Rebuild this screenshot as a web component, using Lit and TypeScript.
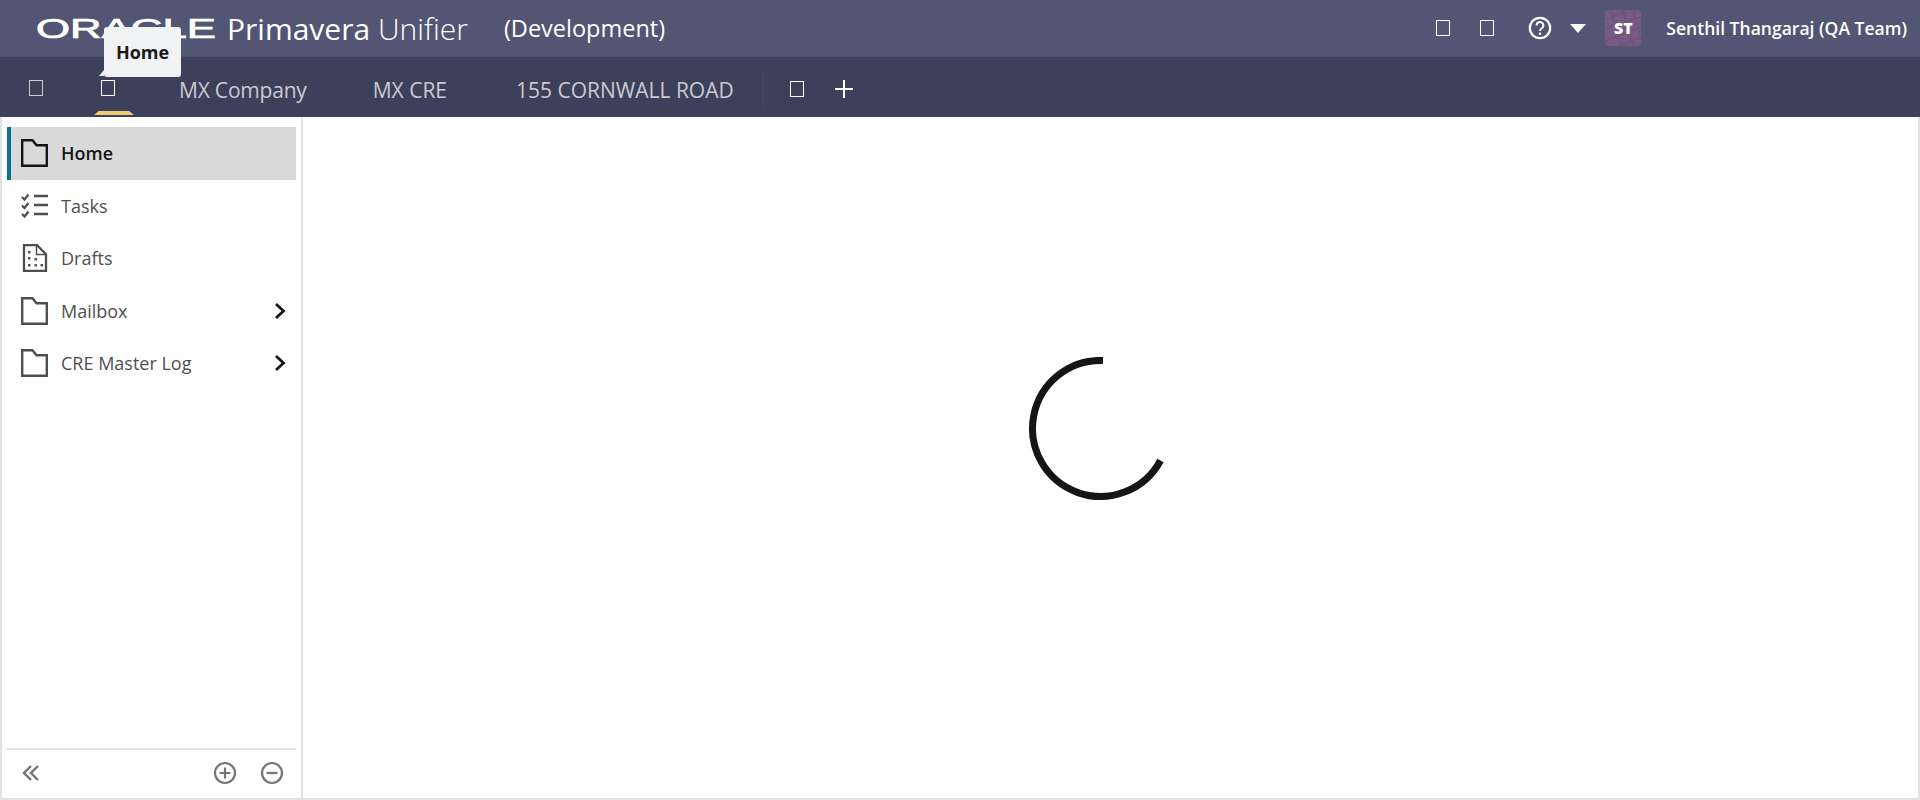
import { LitElement, html, css, svg } from 'lit';
import { customElement } from 'lit/decorators.js';

const folder = svg`<path d="M1.2 1.200h10.300l4 5h10.300v20.600H1.200z" fill="none" stroke="currentColor" stroke-width="2.400"/>`;

@customElement('app-root')
export class AppRoot extends LitElement {
  static styles = css`
    :host {
      display: flex;
      flex-direction: column;
      height: 800px;
      font-family: "Open Sans", "Noto Sans", sans-serif;
      background: #fff;
      overflow: hidden;
    }
    .top {
      height: 57px;
      box-sizing: border-box;
      flex: none;
      background: #525573;
      border-bottom: 1px solid #4a4d69;
      display: flex;
      align-items: center;
      color: #fff;
      padding-left: 36px;
    }
    .logo { width: 180px; height: 30px; flex: none; overflow: visible; margin-right: 1px; }
    .logo text { font-family: "Liberation Sans", sans-serif; font-size: 27.500px; fill: #fff; stroke: #fff; stroke-width: 0.700px; }
    .product { font-size: 30px; margin-left: 10px; white-space: nowrap; }
    .product span { font-weight: 300; }
    .env { font-size: 23.500px; margin-left: 36px; white-space: nowrap; }
    .right { margin-left: auto; display: flex; align-items: center; padding-right: 13px; }
    .tofu { width: 14px; height: 16px; border: 1px solid #fff; box-sizing: border-box; display: block; flex: none; }
    .right .tofu + .tofu { margin-left: 30px; }
    .help { margin-left: 34px; width: 24px; height: 24px; }
    .caret { margin-left: 18px; width: 16px; height: 9px; }
    .avatar {
      margin-left: 19px;
      width: 36px;
      height: 36px;
      border-radius: 4px;
      background: #775b85;
      position: relative;
      overflow: hidden;
      display: flex;
      align-items: center;
      justify-content: center;
      font-size: 16px;
      font-weight: 700;
    }
    .avatar svg { position: absolute; inset: 0; }
    .avatar b { position: relative; }
    .user { margin-left: 25px; font-size: 17.550px; font-weight: 600; white-space: nowrap; }

    .tabs {
      height: 60px;
      box-sizing: border-box;
      padding-top: 4px;
      flex: none;
      background: #3d405b;
      display: flex;
      align-items: center;
      color: #c9cad0;
      font-size: 21px;
      position: relative;
    }
    .tab-icon { width: 72px; height: 100%; flex: none; display: flex; align-items: center; justify-content: center; position: relative; box-sizing: border-box; padding-bottom: 2px; }
    .tab-icon .tofu { border-color: #c9cad0; }
    .tab-icon.active .tofu { border-color: #fff; }
    .tab-icon.active::after {
      content: '';
      position: absolute;
      left: 22px;
      bottom: 2px;
      width: 40px;
      height: 4px;
      background: #f0cc71;
      clip-path: polygon(12% 0, 88% 0, 100% 100%, 0 100%);
    }
    .tab { white-space: nowrap; margin-top: 2px; }
    .tab.company { margin-left: 35px; margin-right: 66px; letter-spacing: -0.200px; }
    .tab.cre { margin-right: 69px; }
    .divider { width: 1px; height: 38px; background: #45486a; margin-left: 29px; margin-right: 26px; }
    .add-tab { border-color: #fff; }
    .plus { width: 20px; height: 20px; margin-left: 30px; }

    .tip {
      position: absolute;
      left: 104px;
      top: -30px;
      width: 77px;
      height: 50px;
      background: #f1f2f4;
      border-radius: 3px;
      color: #1a1a1a;
      font-size: 18px;
      font-weight: 700;
      display: flex;
      align-items: center;
      justify-content: center;
      z-index: 2;
    }
    .tip::after {
      content: '';
      position: absolute;
      left: -5px;
      bottom: 1px;
      border-bottom: 6px solid #f1f2f4;
      border-left: 5px solid transparent;
    }

    .body {
      flex: 1;
      display: flex;
      min-height: 0;
      border: solid #e2e2e2;
      border-width: 0 2px 2px;
    }
    .side {
      flex: none;
      width: 289px;
      border-right: 2px solid #e2e2e2;
      display: flex;
      flex-direction: column;
      padding: 10px 5px 0 5px;
    }
    .nav { flex: 1; }
    .item {
      height: 52.500px;
      display: flex;
      align-items: center;
      padding-left: 10px;
      color: #4f4f4f;
      font-size: 18px;
      font-weight: 500;
      border-left: 4px solid transparent;
    }
    .item.sel { background: #d9d9d9; border-left-color: #0a7290; color: #161513; font-weight: 600; }
    .item svg.ic { width: 27px; height: 28px; flex: none; margin-right: 13px; }
    .item .chev { width: 12px; height: 18px; margin-left: auto; margin-right: 10px; color: #161513; }
    .foot {
      border-top: 2px solid #e2e2e2;
      display: flex;
      align-items: center;
      padding: 0 12px 2px 15px;
      height: 46px;
      color: #747474;
    }
    .foot svg { display: block; }
    .foot .dbl { width: 18px; height: 16px; margin-right: auto; }
    .foot .circ { width: 24px; height: 24px; margin-left: 23px; }
    .main { flex: 1; padding: 240px 0 0 725px; box-sizing: border-box; }
    .spin { width: 144px; height: 144px; display: block; }
  `;

  private folderIcon() {
    return html`<svg class="ic" viewBox="0 0 27 28">${folder}</svg>`;
  }

  private chevron() {
    return html`<svg class="chev" viewBox="0 0 12 18"><path d="M2 2l7.500 7L2 16" fill="none" stroke="currentColor" stroke-width="2.800"/></svg>`;
  }

  render() {
    return html`
      <div class="top">
        <svg class="logo" viewBox="0 0 180 30">
          <text x="0" y="25" textLength="180" lengthAdjust="spacingAndGlyphs">ORACLE</text>
        </svg>
        <div class="product">Primavera <span>Unifier</span></div>
        <div class="env">(Development)</div>
        <div class="right">
          <i class="tofu"></i>
          <i class="tofu"></i>
          <svg class="help" viewBox="0 0 24 24">
            <circle cx="12" cy="12" r="10.200" fill="none" stroke="#fff" stroke-width="2.200"/>
            <path d="M8.600 9.400a3.400 3.400 0 1 1 5.400 2.700c-1.300.9-2 1.500-2 2.900" fill="none" stroke="#fff" stroke-width="2"/>
            <circle cx="12" cy="17.800" r="1.300" fill="#fff"/>
          </svg>
          <svg class="caret" viewBox="0 0 16 9"><path d="M0 0h16L8 9z" fill="#fff"/></svg>
          <div class="avatar">
            <svg width="36" height="36" viewBox="0 0 36 36">
              <path d="M-2 10L20 2M-2 20L38 6M-2 32L38 16M10 38L38 26M6 0l10 36M18 0l10 36M28 0l8 30" fill="none" stroke="#6c5278" stroke-width="1.200"/>
            </svg>
            <b>ST</b>
          </div>
          <div class="user">Senthil Thangaraj (QA Team)</div>
        </div>
      </div>
      <div class="tabs">
        <div class="tip">Home</div>
        <div class="tab-icon"><i class="tofu"></i></div>
        <div class="tab-icon active"><i class="tofu"></i></div>
        <div class="tab company">MX Company</div>
        <div class="tab cre">MX CRE</div>
        <div class="tab">155 CORNWALL ROAD</div>
        <div class="divider"></div>
        <i class="tofu add-tab"></i>
        <svg class="plus" viewBox="0 0 20 20"><path d="M10 1v18M1 10h18" stroke="#fff" stroke-width="2"/></svg>
      </div>
      <div class="body">
        <div class="side">
          <div class="nav">
            <div class="item sel">${this.folderIcon()}Home</div>
            <div class="item">
              <svg class="ic" viewBox="0 0 27 28">
                <path d="M1 5l2.500 2.500 4-5M1 13.500l2.500 2.500 4-5M1 22l2.500 2.500 4-5" fill="none" stroke="currentColor" stroke-width="2.200"/>
                <path d="M13 4h14M13 13h14M13 22h14" stroke="currentColor" stroke-width="2.600"/>
              </svg>Tasks
            </div>
            <div class="item">
              <svg class="ic" viewBox="0 0 27 28">
                <path d="M3 1.200h13l9 9v16.600H3z" fill="none" stroke="currentColor" stroke-width="2.300"/>
                <path d="M15.500 1.500v9h9" fill="none" stroke="currentColor" stroke-width="1.500"/>
                <path d="M7 7h2.400v2.400H7zM7 13h2.400v2.400H7zM7 20h2.400v2.400H7zM13.500 14h2.400v2.400h-2.400zM13.500 20h2.400v2.400h-2.400zM19.500 20h2.400v2.400h-2.400z" fill="currentColor"/>
              </svg>Drafts
            </div>
            <div class="item">${this.folderIcon()}Mailbox${this.chevron()}</div>
            <div class="item">${this.folderIcon()}CRE Master Log${this.chevron()}</div>
          </div>
          <div class="foot">
            <svg class="dbl" viewBox="0 0 18 16"><path d="M9 1L2 8l7 7M16 1L9 8l7 7" fill="none" stroke="currentColor" stroke-width="2.400"/></svg>
            <svg class="circ" viewBox="0 0 24 24"><circle cx="12" cy="12" r="10" fill="none" stroke="currentColor" stroke-width="2.200"/><path d="M6.500 12h11M12 6.500v11" stroke="currentColor" stroke-width="2.200"/></svg>
            <svg class="circ" viewBox="0 0 24 24"><circle cx="12" cy="12" r="10" fill="none" stroke="currentColor" stroke-width="2.200"/><path d="M6.500 12h11" stroke="currentColor" stroke-width="2.200"/></svg>
          </div>
        </div>
        <div class="main">
          <svg class="spin" viewBox="0 0 144 144">
            <path d="M75 3.500A68 68 0 1 0 132.500 103.500" fill="none" stroke="#161513" stroke-width="7"/>
          </svg>
        </div>
      </div>
    `;
  }
}
